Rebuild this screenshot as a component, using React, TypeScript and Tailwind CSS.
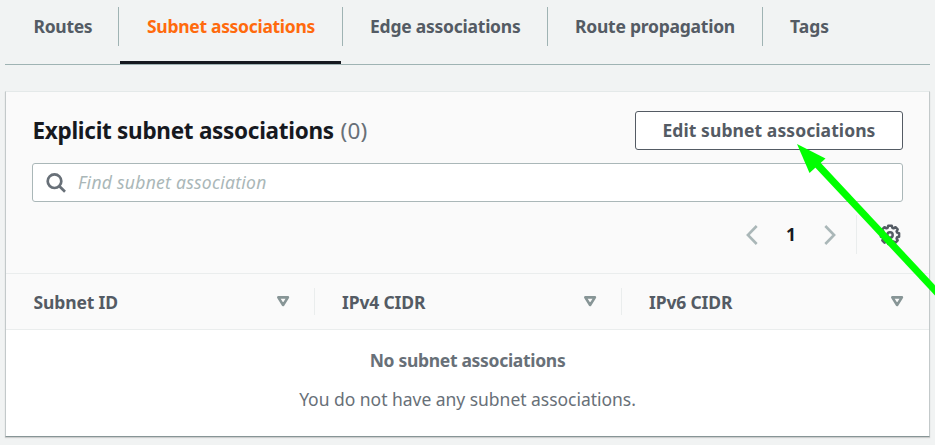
import React from "react";

type Tab = { label: string; cell: string; text: string; active?: boolean };

const tabs: Tab[] = [
  { label: "Routes", cell: "w-[114px] border-r", text: "ml-[28.5px] tracking-[-0.3px]" },
  { label: "Subnet associations", cell: "w-[224px] border-r", text: "ml-[28px] tracking-[-0.3px]", active: true },
  { label: "Edge associations", cell: "w-[205px] border-r", text: "ml-[27px] tracking-[-0.24px]" },
  { label: "Route propagation", cell: "w-[215px] border-r", text: "ml-[27px] tracking-[-0.24px]" },
  { label: "Tags", cell: "w-[100px]", text: "ml-[27px]" },
];

const columns = [
  { label: "Subnet ID", cell: "w-[309px] pl-[27.5px] pr-[24px] border-r" },
  { label: "IPv4 CIDR", cell: "w-[307px] pl-[27px] pr-[24px] border-r" },
  { label: "IPv6 CIDR", cell: "w-[307px] pl-[27px] pr-[25px]" },
];

function SortIcon() {
  return (
    <svg width="14" height="12" viewBox="0 0 14 12" className="mb-[1px]" fill="none" stroke="#879596" strokeWidth="2.6" strokeLinejoin="round">
      <path d="M2.3 2.4H11.9L7.1 10Z" />
    </svg>
  );
}

function Chevron({ flip = false }: { flip?: boolean }) {
  return (
    <svg width="12" height="20" viewBox="0 0 12 20" className={flip ? "rotate-180" : ""} fill="none" stroke="#aab7b8" strokeWidth="2.6">
      <path d="M10.7 1L1.9 10L10.7 19" />
    </svg>
  );
}

function Gear() {
  return (
    <svg width="22" height="22" viewBox="0 0 22 22" fill="none" stroke="#545b64" strokeWidth="2.5" strokeLinejoin="round">
      <path d="M9.2 1.8h3.6l.5 2 1.3.5 1.9-1.1 2.2 2.2-1.1 1.9.5 1.3 2 .5v3.6l-2 .5-.5 1.3 1.1 1.9-2.2 2.2-1.9-1.1-1.3.5-.5 2H9.2l-.5-2-1.3-.5-1.9 1.1-2.2-2.2 1.1-1.9-.5-1.3-2-.5V9.1l2-.5.5-1.3-1.1-1.9 2.2-2.2 1.9 1.1 1.3-.5z" />
      <circle cx="11" cy="11" r="2.7" />
    </svg>
  );
}

export default function App() {
  return (
    <div className="relative h-[445px] w-[935px] overflow-hidden bg-[#f1f3f3] pl-[5px] font-['Noto_Sans',sans-serif] text-[17.5px] text-[#545b64]">
      <nav className="flex h-[65px] w-[925px] border-b border-[#9fb3b3] pt-[7px] font-bold">
        {tabs.map((t) => (
          <div key={t.label} className={`relative h-[39px] shrink-0 border-[#9fb3b3] ${t.cell}`}>
            <div className={`whitespace-nowrap leading-[39px] ${t.text} ${t.active ? "text-[#ff6a0d]" : ""}`}>{t.label}</div>
            {t.active && <div className="absolute left-px top-[54px] h-[3px] w-[221px] bg-[#16191f]" />}
          </div>
        ))}
      </nav>

      <section className="mt-[26px] flex h-[346px] w-[925px] flex-col border border-t-[#e4e9e9] border-x-[#c3c9ca] border-b-[#879596] bg-[#fafafa] shadow-[0_1px_1px_#00000026]">
        <header className="flex h-[58px] shrink-0 items-end justify-between pl-[26.5px] pr-[26px]">
          <h2 className="h-[38px] whitespace-nowrap text-[22.5px] font-bold leading-[38px] tracking-[-0.29px] text-[#16191f]">
            Explicit subnet associations <span className="ml-px font-normal tracking-[0.3px] text-[#687078]">(0)</span>
          </h2>
          <button className="h-[39px] w-[268px] whitespace-nowrap rounded-[3px] border border-[#545b64] bg-white font-bold tracking-[0.08px]">Edit subnet associations</button>
        </header>
        <div className="ml-[26px] mt-[13px] flex h-[39px] w-[871px] shrink-0 items-center rounded-[3px] border border-[#aab7b8] bg-white pl-[13px]">
          <svg width="20" height="20" viewBox="0 0 20 20" fill="none" stroke="#687078" strokeWidth="2.7">
            <circle cx="8.5" cy="8.2" r="6.8" />
            <path d="M13.2 13L19 18.7" />
          </svg>
          <span className="ml-3 whitespace-nowrap italic tracking-[0.27px] text-[#aab7b8]">Find subnet association</span>
        </div>
        <div className="flex h-[71px] shrink-0 items-center justify-end pb-[6px] pr-[28px]">
          <Chevron />
          <span className="w-[66px] text-center font-bold text-[#16191f]">1</span>
          <Chevron flip />
          <div className="ml-5 mr-[22px] h-[39px] w-px bg-[#eaeded]" />
          <Gear />
        </div>
        <div className="flex h-[57px] shrink-0 items-center border-y border-[#eaeded] font-bold">
          {columns.map((c) => (
            <div key={c.label} className={`flex h-[27px] items-center justify-between border-[#eaeded] ${c.cell}`}>
              <span className="whitespace-nowrap pt-[2px] tracking-[-0.14px]">{c.label}</span>
              <SortIcon />
            </div>
          ))}
        </div>
        <div className="flex flex-1 flex-col items-center bg-white pt-[11px] leading-[39px] text-[#687078]">
          <b className="tracking-[-0.31px]">No subnet associations</b>
          <p className="tracking-[-0.03px]">You do not have any subnet associations.</p>
        </div>
      </section>

      <svg className="pointer-events-none absolute left-0 top-0" width="935" height="445">
        <path d="M815 162L938 293.5" stroke="#00ff00" strokeWidth="7" />
        <path d="M797 144L825.5 158.5L809.5 173Z" fill="#00ff00" />
      </svg>
    </div>
  );
}
